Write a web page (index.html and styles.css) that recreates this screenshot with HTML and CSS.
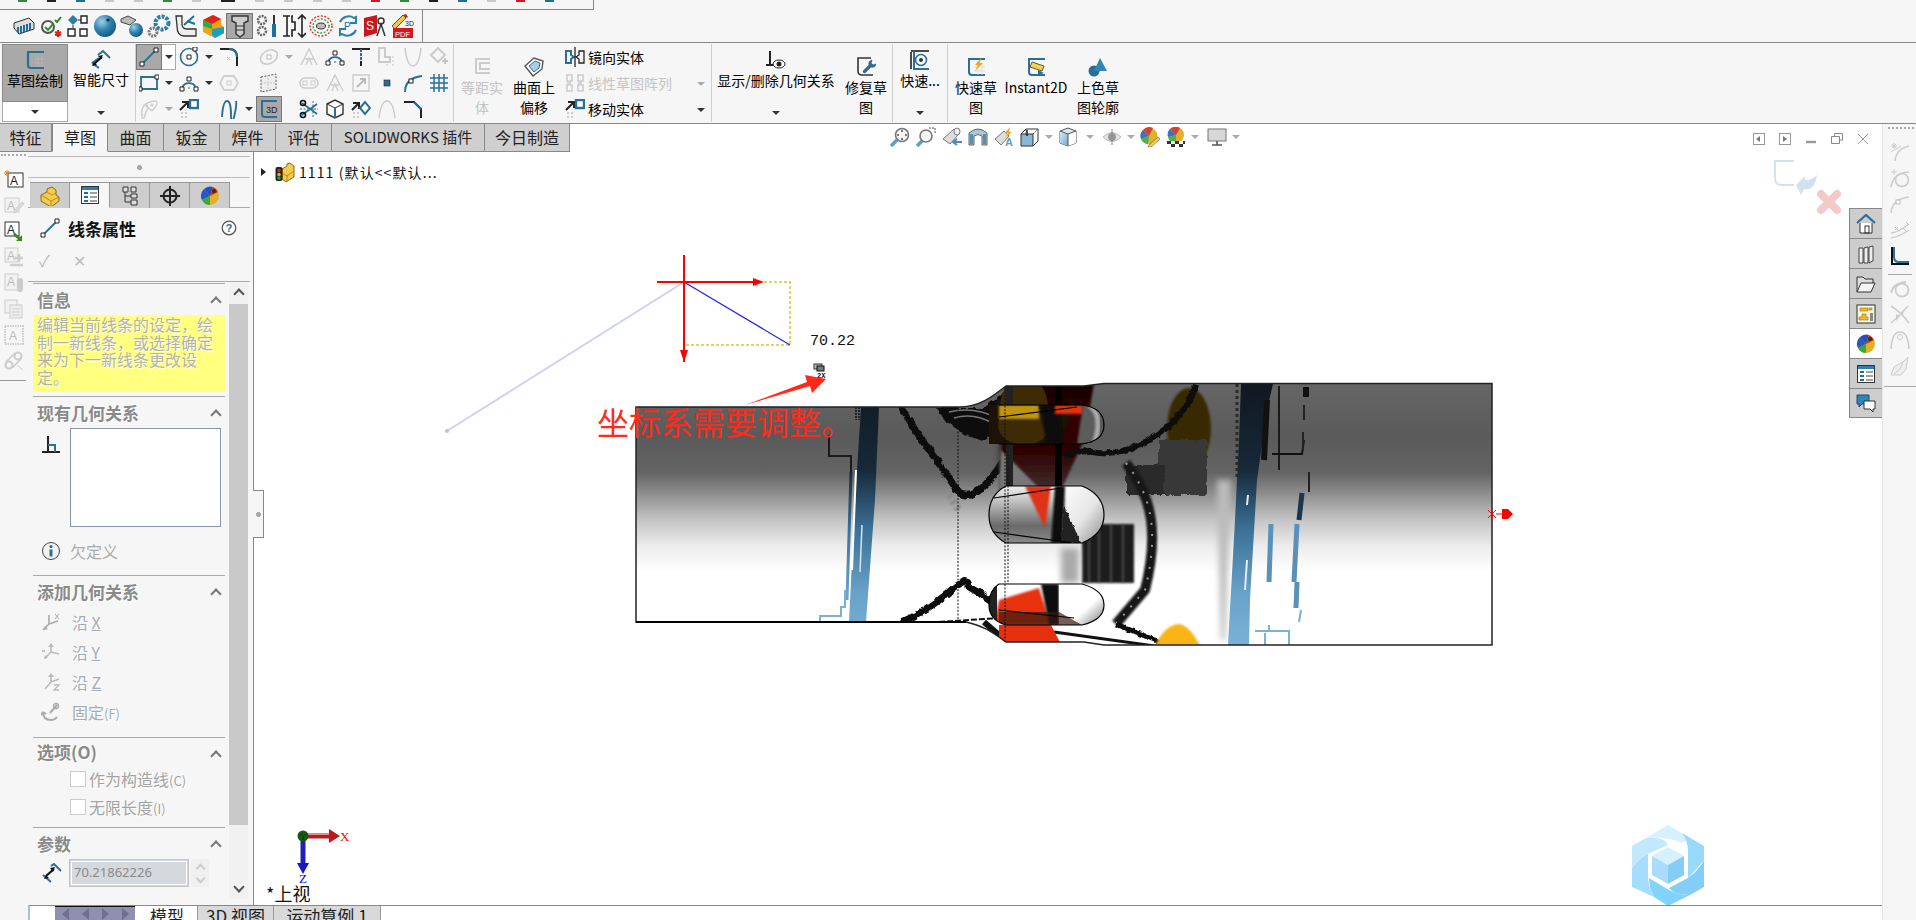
FILE: index.html
```html
<!DOCTYPE html>
<html lang="zh">
<head>
<meta charset="utf-8">
<title>SOLIDWORKS 草图</title>
<link rel="stylesheet" href="styles.css">
</head>
<body>
<svg class="sprite" xmlns="http://www.w3.org/2000/svg">
<defs>
<radialGradient id="gBall" cx=".35" cy=".3" r=".8"><stop offset="0" stop-color="#9fd0ea"/><stop offset=".5" stop-color="#2f83ad"/><stop offset="1" stop-color="#154f70"/></radialGradient>
<linearGradient id="gBox" x1="0" y1="0" x2="1" y2="1"><stop offset="0" stop-color="#d6ecf8"/><stop offset="1" stop-color="#6fa9cc"/></linearGradient>

<!-- command bar -->
<symbol id="c1" viewBox="0 0 24 24"><path d="M2 9l15-5 5 5v6l-15 5-5-6z" fill="#ddd" stroke="#333"/><path d="M6 13v6M9 12v7M12 11v7M15 10v7M18 9v7" stroke="#1f6f9c" stroke-width="2"/></symbol>
<symbol id="c2" viewBox="0 0 24 24"><circle cx="9" cy="13" r="6" fill="none" stroke="#555" stroke-width="2"/><path d="M6 13l3 3 5-6" fill="none" stroke="#2a9a2a" stroke-width="2"/><path d="M16 6l2 2 4-5" fill="none" stroke="#2a8a2a" stroke-width="2"/><path d="M19 16v7M16 18l6 3M22 18l-6 3" stroke="#e02010" stroke-width="2"/></symbol>
<symbol id="c3" viewBox="0 0 24 24"><path d="M7 1l5 5-5 5-5-5z" fill="#2f7ea6"/><path d="M7 11v3M12 6h3" stroke="#333"/><path d="M15 2h6v7h-6zM2 15h7v7H2zM14 15h7v7h-7z" fill="#fff" stroke="#222" stroke-width="1.4"/></symbol>
<symbol id="c4" viewBox="0 0 24 24"><circle cx="12" cy="12" r="11" fill="url(#gBall)"/><circle cx="15" cy="6" r="1.6" fill="#102a3a"/></symbol>
<symbol id="c5" viewBox="0 0 24 24"><path d="M1 5l7-3 8 4-6 5-9-3z" fill="#bbb" stroke="#444"/><circle cx="16" cy="16" r="7" fill="url(#gBall)"/></symbol>
<symbol id="c6" viewBox="0 0 24 24"><circle cx="15" cy="9" r="6.5" fill="none" stroke="#2f7ea6" stroke-width="4" stroke-dasharray="3 1.2"/><circle cx="6" cy="18" r="4" fill="none" stroke="#777" stroke-width="3" stroke-dasharray="2 1"/></symbol>
<symbol id="c7" viewBox="0 0 24 24"><path d="M2 2h6v8q0 5 5 5h9v7H10Q3 22 3 12z" fill="#eee" stroke="#333" stroke-width="1.3"/><path d="M10 11l10-9M13 7l8 3" stroke="#1f6f9c" stroke-width="2"/></symbol>
<symbol id="c8" viewBox="0 0 24 24"><path d="M2 6l10-5 8 4v6l3 2v6l-9 5-12-6z" fill="#f0a010"/><path d="M2 6l10-5 8 4-9 5z" fill="#e02020"/><path d="M2 6l9 4v5l-9-3z" fill="#20b040"/><path d="M11 15l12-2v6l-9 5-3-3z" fill="#18a0c0"/></symbol>
<symbol id="c9" viewBox="0 0 24 24"><path d="M4 2h16v5l-4 2v11l-4 3-4-3V9L4 7z" fill="#ccc" stroke="#333" stroke-width="1.4"/><path d="M8 12h8M8 16h8" stroke="#333"/></symbol>
<symbol id="c10" viewBox="0 0 24 24"><circle cx="7" cy="6" r="4" fill="none" stroke="#666" stroke-width="2.5" stroke-dasharray="2 1"/><circle cx="7" cy="17" r="4" fill="none" stroke="#666" stroke-width="2.5" stroke-dasharray="2 1"/><path d="M19 1v9" stroke="#333" stroke-width="2"/><path d="M19 10v13" stroke="#1f6f9c" stroke-width="4"/></symbol>
<symbol id="c11" viewBox="0 0 24 24"><path d="M1 2h7M1 22h7M5 2v20M11 2h-1v6h3v8h-3v6h1" fill="none" stroke="#222" stroke-width="1.6"/><path d="M20 1v22M16 5l4-4 4 4M16 19l4 4 4-4" fill="none" stroke="#222" stroke-width="1.6"/></symbol>
<symbol id="c12" viewBox="0 0 24 24"><ellipse cx="12" cy="12" rx="11" ry="10" fill="none" stroke="#e03020" stroke-dasharray="2 1.5" stroke-width="1.4"/><ellipse cx="12" cy="12" rx="8" ry="7" fill="none" stroke="#30a040" stroke-dasharray="2 1.5" stroke-width="1.4"/><ellipse cx="12" cy="12" rx="4.5" ry="3" fill="#bbb" stroke="#333"/></symbol>
<symbol id="c13" viewBox="0 0 24 24"><path d="M4 8a9.5 9.5 0 0 1 14-4l2-1v6h-6M20 16a9.5 9.5 0 0 1-14 4l-2 1v-6h6" fill="none" stroke="#2f7ea6" stroke-width="2"/><text x="8" y="16" class="svgt" font-size="10" fill="#1f6f9c">P</text></symbol>
<symbol id="c14" viewBox="0 0 24 24"><path d="M1 4l13-3v18L1 23z" fill="#c8161d"/><text x="3" y="16" class="svgt" font-size="12" fill="#fff">S</text><circle cx="18" cy="7" r="3" fill="none" stroke="#333" stroke-width="1.5"/><path d="M14 22l4-12 4 12" fill="none" stroke="#333" stroke-width="1.5"/></symbol>
<symbol id="c15" viewBox="0 0 24 24"><path d="M2 12L13 1l3 3L5 15z" fill="#f3c544" stroke="#555"/><path d="M13 1l3-1 2 3-2 1z" fill="#d02020"/><text x="15" y="12" class="svgt" font-size="7" fill="#222">3D</text><rect x="3" y="14" width="20" height="10" fill="#d8161d"/><text x="5" y="22.500" class="svgt" font-size="7.500" fill="#fff">PDF</text></symbol>

<!-- big ribbon -->
<symbol id="b-sketch" viewBox="0 0 20 20"><path d="M19 2H3v13q0 3 3 3h13" fill="none" stroke="#2b6f96" stroke-width="2.200"/><path d="M10 9h9M10 13h9M13 6v12M17 6v12" stroke="#bbb" stroke-dasharray="1.500 1.500"/></symbol>
<symbol id="b-dim" viewBox="0 0 20 20"><path d="M7 6l5-4 7 7" fill="none" stroke="#2b6f96" stroke-width="2"/><path d="M1 14l7 5M1 14l7-5" stroke="#2b6f96" stroke-width="2"/><path d="M3 15l8-7" stroke="#111" stroke-width="2"/><path d="M12 6l-5 1 3 3zM1 17l5-1-3-3z" fill="#111"/></symbol>
<symbol id="b-offset" viewBox="0 0 20 20"><path d="M18 2H4v14h14M18 6H8v6h10" fill="none" stroke="#ccc" stroke-width="2"/></symbol>
<symbol id="b-surf" viewBox="0 0 20 20"><path d="M1 9l9-8 9 3-1 8-9 7z" fill="#fff" stroke="#555" stroke-width="1.400"/><path d="M5 9l6-5 5 2-1 5-5 4z" fill="#a9cfe4" stroke="#2b6f96"/></symbol>
<symbol id="b-rel" viewBox="0 0 20 20"><path d="M4 1v14M0 15h10" stroke="#222" stroke-width="2"/><ellipse cx="13" cy="14" rx="6" ry="4" fill="#fff" stroke="#222"/><circle cx="13" cy="14" r="2.500" fill="#222"/></symbol>
<symbol id="b-repair" viewBox="0 0 20 20"><path d="M15 1H2v13q0 4 4 4h11" fill="none" stroke="#333" stroke-width="1.600"/><path d="M7 14l6-6q-1-4 3-5l-1 3 2 2 3-1q-1 4-5 3l-6 6q-2 0-2-2z" fill="#2b6f96" stroke="#1a4f70" stroke-width=".6"/></symbol>
<symbol id="b-snap" viewBox="0 0 20 20"><path d="M1 19V2M19 1H1" stroke="#111" stroke-width="1.500"/><path d="M4 1v18M19 19H3" stroke="#2b6f96" stroke-width="2"/><circle cx="11" cy="10" r="5.500" fill="none" stroke="#2b6f96" stroke-width="1.500"/><circle cx="11" cy="10" r="2" fill="#333"/></symbol>
<symbol id="b-quick" viewBox="0 0 20 20"><path d="M19 2H3v13q0 3 3 3h13" fill="none" stroke="#2b6f96" stroke-width="2"/><path d="M8 10h11M8 14h11M12 6v12M16 6v12" stroke="#ddd"/><path d="M15 1l-6 7h3l-3 6 8-8h-3z" fill="#f2a51c"/></symbol>
<symbol id="b-inst" viewBox="0 0 20 20"><path d="M19 2H3v13q0 3 3 3h13" fill="none" stroke="#2b6f96" stroke-width="2"/><path d="M6 5l12 4-2 5-12-4z" fill="#f3d24c" stroke="#333" stroke-width=".8"/><path d="M12 13l6 3-6 2z" fill="#2b6f96"/></symbol>
<symbol id="b-shade" viewBox="0 0 20 20"><circle cx="6" cy="14" r="5.500" fill="#2b6f96"/><path d="M12 1l7 13H6z" fill="#2f86b5"/></symbol>

<!-- small ribbon -->
<symbol id="s-line" viewBox="0 0 20 20"><path d="M3 17L17 3" stroke="#2b6f96" stroke-width="1.800"/><path d="M1 15h4v4H1zM15 1h4v4h-4z" fill="#fff" stroke="#222"/></symbol>
<symbol id="s-rect" viewBox="0 0 20 20"><path d="M2 4h16v12H2z" fill="none" stroke="#2b6f96" stroke-width="1.800"/><path d="M0 14h3v4H0zM16 2h4v4h-4z" fill="#fff" stroke="#222"/></symbol>
<symbol id="s-circle" viewBox="0 0 20 20"><circle cx="10" cy="10" r="8.500" fill="none" stroke="#2b6f96" stroke-width="1.600"/><path d="M8 8h4v4H8zM14 0h4v4h-4z" fill="#fff" stroke="#222"/></symbol>
<symbol id="s-arc" viewBox="0 0 20 20"><path d="M3 15a7.500 7.500 0 0 1 14 0" fill="none" stroke="#2b6f96" stroke-width="1.800"/><path d="M8 4h4v4H8zM1 14h4v4H1zM15 14h4v4h-4z" fill="#fff" stroke="#222"/><path d="M9 14l2 2M11 14l-2 2" stroke="#aaa"/></symbol>
<symbol id="s-fillet" viewBox="0 0 20 20"><path d="M1 2h9q8 0 8 8v9" fill="none" stroke="#222" stroke-width="2"/><path d="M10 2q8 0 8 8" fill="none" stroke="#2b6f96" stroke-width="2"/><path d="M8 10l3 3M11 10l-3 3" stroke="#bbb"/></symbol>
<symbol id="s-ellipse" viewBox="0 0 20 20"><ellipse cx="10" cy="10" rx="9" ry="6.500" transform="rotate(-30 10 10)" fill="none" stroke="#ccc" stroke-width="1.600"/><rect x="8" y="8" width="4" height="4" fill="#fff" stroke="#bbb"/></symbol>
<symbol id="s-a" viewBox="0 0 20 20"><path d="M2 18L10 2l8 16M6 12h8M7 18l3-7 3 7" fill="none" stroke="#ccc" stroke-width="1.400"/></symbol>
<symbol id="s-t" viewBox="0 0 20 20"><path d="M1 2h18" stroke="#222" stroke-width="2"/><path d="M10 2v12" stroke="#2b6f96" stroke-width="2" stroke-dasharray="3 1"/><path d="M10 14v5" stroke="#222" stroke-width="2"/></symbol>
<symbol id="s-l" viewBox="0 0 20 20"><path d="M2 1h6v9h5v5H2z" fill="none" stroke="#ccc" stroke-width="2"/><path d="M15 10h4M15 14h4M15 18h4M9 18h4" stroke="#ddd" stroke-width="2" stroke-dasharray="2 2"/></symbol>
<symbol id="s-para" viewBox="0 0 20 20"><path d="M2 1q2 18 8 18T18 1" fill="none" stroke="#ccc" stroke-width="1.600"/></symbol>
<symbol id="s-dia" viewBox="0 0 20 20"><path d="M2 8l7-7 7 7-7 7z" fill="none" stroke="#ccc" stroke-width="2"/><path d="M13 14h6M16 11v6" stroke="#bbb" stroke-width="1.600"/></symbol>
<symbol id="s-poly" viewBox="0 0 20 20"><path d="M5 3h10l4 7-4 7H5l-4-7z" fill="none" stroke="#d0d0d0" stroke-width="1.800"/><rect x="8" y="8" width="4" height="4" fill="none" stroke="#ccc"/></symbol>
<symbol id="s-dash" viewBox="0 0 20 20"><path d="M2 4l15-3v15L2 19z" fill="#eee" stroke="#555" stroke-dasharray="2 1.500"/><path d="M9 2v16M2 10h15" stroke="#ccc" stroke-dasharray="2 1"/></symbol>
<symbol id="s-slot" viewBox="0 0 20 20"><rect x="1" y="5" width="18" height="10" rx="5" fill="none" stroke="#ccc" stroke-width="1.600"/><rect x="4" y="8" width="4" height="4" fill="none" stroke="#ccc"/><rect x="12" y="8" width="4" height="4" fill="none" stroke="#ccc"/></symbol>
<symbol id="s-conv" viewBox="0 0 20 20"><path d="M2 2h16v16H2z" fill="none" stroke="#ccc" stroke-width="1.400"/><path d="M6 14l7-7M9 6h5v5" fill="none" stroke="#bbb" stroke-width="2"/></symbol>
<symbol id="s-pt" viewBox="0 0 20 20"><rect x="7" y="7" width="6" height="6" fill="#2b6f96" stroke="#222" stroke-width=".6"/></symbol>
<symbol id="s-curve" viewBox="0 0 20 20"><path d="M2 19q0-14 17-16" fill="none" stroke="#2b6f96" stroke-width="2"/><rect x="6" y="6" width="4" height="4" fill="#fff" stroke="#222"/></symbol>
<symbol id="s-grid" viewBox="0 0 20 20"><path d="M1 5h18M1 10h18M1 15h18M5 1v18M10 1v18M15 1v18" stroke="#2b6f96" stroke-width="1.500"/></symbol>
<symbol id="s-spl" viewBox="0 0 20 20"><path d="M3 16q-2-10 8-13t6 4-6 3-5 6-3 0z" fill="none" stroke="#ccc" stroke-width="1.500"/><circle cx="8" cy="7" r="1.500" fill="#ccc"/><circle cx="13" cy="6" r="1.500" fill="#ccc"/></symbol>
<symbol id="s-move" viewBox="0 0 20 20"><path d="M1 11l7-7M3 3h6v6" fill="none" stroke="#222" stroke-width="2"/><rect x="11" y="1" width="8" height="8" fill="#fff" stroke="#2b6f96" stroke-width="2.400"/><path d="M2 14h2M6 14h2M2 18h2M6 18h2" stroke="#ccc" stroke-width="2"/></symbol>
<symbol id="s-n" viewBox="0 0 20 20"><path d="M3 18Q4 2 8 2t4 14 3 2 2-16" fill="none" stroke="#2b6f96" stroke-width="1.900"/></symbol>
<symbol id="s-3d" viewBox="0 0 20 20"><path d="M18 2H3v13q0 3 3 3h12" fill="none" stroke="#2b6f96" stroke-width="2"/><text x="7" y="14" class="svgt" font-size="9" fill="#222">3D</text></symbol>
<symbol id="s-trim" viewBox="0 0 20 20"><path d="M3 4l15 11M3 16L18 5" stroke="#2b6f96" stroke-width="1.800"/><circle cx="4" cy="4" r="2.500" fill="none" stroke="#111" stroke-width="1.600"/><circle cx="4" cy="16" r="2.500" fill="none" stroke="#111" stroke-width="1.600"/><path d="M1 10h18M14 2v16" stroke="#2b6f96" stroke-dasharray="2 1.500"/></symbol>
<symbol id="s-cube" viewBox="0 0 20 20"><path d="M2 5l8-4 8 4v10l-8 4-8-4z" fill="#fff" stroke="#333" stroke-width="1.400"/><path d="M2 5l8 4 8-4M10 9v10" fill="none" stroke="#333"/><path d="M10 9v10" stroke="#2b6f96" stroke-width="2"/></symbol>
<symbol id="s-mv2" viewBox="0 0 20 20"><path d="M1 11l6-6M2 4h6v6" fill="none" stroke="#222" stroke-width="2"/><path d="M9 9l5-6 5 6-5 6z" fill="#fff" stroke="#2b6f96" stroke-width="2"/><path d="M2 14h2M6 14h2M2 18h2M6 18h2" stroke="#ccc" stroke-width="2"/></symbol>
<symbol id="s-arch" viewBox="0 0 20 20"><path d="M2 19Q4 2 10 2t8 17" fill="none" stroke="#ccc" stroke-width="1.400"/></symbol>
<symbol id="s-chamfer" viewBox="0 0 20 20"><path d="M1 3h10l7 7v9" fill="none" stroke="#222" stroke-width="2"/><path d="M11 3l7 7" stroke="#2b6f96" stroke-width="2"/></symbol>
<symbol id="s-mirror" viewBox="0 0 20 20"><path d="M1 4h5v4l3 2-3 2v4H1z" fill="none" stroke="#2b6f96" stroke-width="2"/><path d="M19 4h-5v4l-3 2 3 2v4h5z" fill="none" stroke="#222" stroke-width="1.300"/><path d="M10 0v20" stroke="#222" stroke-width="1.300"/></symbol>
<symbol id="s-pattern" viewBox="0 0 20 20"><path d="M2 2h5v6H5v4h2v6H2v-6h1V8H2zM13 2h5v6h-2v4h2v6h-5v-6h1V8h-1z" fill="none" stroke="#ccc" stroke-width="1.600"/></symbol>

<!-- tabs -->
<symbol id="t-part" viewBox="0 0 20 20"><path d="M1 9l6-3V3l5-2 4 3v5l3 2v4l-8 6-10-6z" fill="#f6ca4a" stroke="#8a6a10"/><path d="M1 9l10 6v5M11 15l8-4M7 6l5 3 4-2" fill="none" stroke="#a57e12" stroke-width=".8"/></symbol>
<symbol id="t-model" viewBox="0 0 20 20"><path d="M7 7l5-3V2l3-1 4 3v5l0 6-8 5-4-3z" fill="#f6ca4a" stroke="#8a6a10"/><path d="M7 11l5 3 7-5M12 14v5" fill="none" stroke="#a57e12" stroke-width=".8"/><rect x="0.500" y="5" width="7" height="14" rx="2" fill="#222"/><circle cx="4" cy="8.500" r="1.800" fill="#d8281c"/><circle cx="4" cy="12.500" r="1.800" fill="#e0b020"/><circle cx="4" cy="16" r="1.800" fill="#2aa040"/></symbol>
<symbol id="t-list" viewBox="0 0 20 20"><rect x="1.500" y="1.500" width="17" height="17" fill="#fff" stroke="#333"/><path d="M2 3.500h16" stroke="#2b80ad" stroke-width="3"/><path d="M4 8h4M4 12h4M4 16h4" stroke="#1f6f9c" stroke-width="2"/><path d="M10 8h7M10 12h7M10 16h7" stroke="#444"/></symbol>
<symbol id="t-tree" viewBox="0 0 20 20"><path d="M3 1h5v5H3zM11 1h5v5h-5zM11 8h6v4h-6zM11 14h6v5h-6z" fill="#ddd" stroke="#333"/><path d="M5 6v10h6M5 10h6" fill="none" stroke="#333"/></symbol>
<symbol id="t-cross" viewBox="0 0 20 20"><circle cx="10" cy="10" r="6.500" fill="none" stroke="#222" stroke-width="2"/><path d="M10 0v20M0 10h20" stroke="#222" stroke-width="2"/></symbol>
<symbol id="t-ball" viewBox="0 0 20 20"><circle cx="10" cy="10" r="9" fill="#dfb22a"/><path d="M10 10L4 3a9 9 0 0 1 9-2z" fill="#2050b8"/><path d="M10 10l3-9a9 9 0 0 1 5 5z" fill="#d82818"/><path d="M10 10l-6-7a9 9 0 0 0-2 11z" fill="#2858c8"/><path d="M10 10l-8 4a9 9 0 0 0 8 5z" fill="#3ca83c"/><circle cx="14" cy="5" r="2" fill="#331"/></symbol>

<!-- left strip -->
<symbol id="l1" viewBox="0 0 20 20"><rect x="4" y="4" width="15" height="14" fill="#fff" stroke="#333"/><text x="6" y="16" class="svgt" font-size="12" fill="#222">A</text><path d="M3 1v6M0 4h6M1 2l4 4M5 2L1 6" stroke="#e0802a"/></symbol>
<symbol id="l2" viewBox="0 0 20 20"><rect x="1" y="3" width="14" height="14" fill="#f2f2f2" stroke="#ccc"/><text x="3" y="15" class="svgt" font-size="12" fill="#bbb">A</text><path d="M9 17l9-10 2 2-9 9z" fill="#ddd" stroke="#ccc"/></symbol>
<symbol id="l3" viewBox="0 0 20 20"><rect x="1" y="1" width="14" height="14" fill="#fff" stroke="#333"/><text x="3" y="13" class="svgt" font-size="12" fill="#222">A</text><path d="M11 12l5 4 2-2v6h-6l2-2-5-4z" fill="#3a8a1a"/></symbol>
<symbol id="l4" viewBox="0 0 20 20"><rect x="1" y="1" width="13" height="14" fill="#f2f2f2" stroke="#ccc"/><text x="3" y="13" class="svgt" font-size="12" fill="#bbb">A</text><path d="M11 11h8M15 7v8M6 18h13" stroke="#ccc" stroke-width="2.400"/></symbol>
<symbol id="l5" viewBox="0 0 20 20"><rect x="1" y="1" width="13" height="16" fill="#f2f2f2" stroke="#ccc"/><text x="3" y="13" class="svgt" font-size="12" fill="#bbb">A</text><rect x="13" y="5" width="6" height="14" rx="3" fill="#ccc"/></symbol>
<symbol id="l6" viewBox="0 0 20 20"><rect x="1" y="1" width="12" height="13" fill="#f2f2f2" stroke="#ccc"/><rect x="6" y="6" width="12" height="13" fill="#eee" stroke="#ccc"/><path d="M8 10h8M8 13h8M8 16h8" stroke="#ccc"/></symbol>
<symbol id="l7" viewBox="0 0 20 20"><rect x="1" y="1" width="18" height="18" fill="none" stroke="#ccc" stroke-width="2" stroke-dasharray="1.500 1"/><text x="5" y="15" class="svgt" font-size="12" fill="#bbb">A</text></symbol>
<symbol id="l8" viewBox="0 0 20 20"><circle cx="5" cy="14" r="3.500" fill="none" stroke="#ccc" stroke-width="2"/><circle cx="14" cy="5" r="3.500" fill="none" stroke="#ccc" stroke-width="2"/><path d="M2 11l9-9M8 17l9-9" stroke="#ccc" stroke-width="1.600"/><path d="M13 14l6 5" stroke="#ccc"/></symbol>

<!-- panel -->
<symbol id="p-rel" viewBox="0 0 20 20"><path d="M7 1v16M1 17h18" stroke="#222" stroke-width="2"/><path d="M7 10h7v7" fill="none" stroke="#2b6f96" stroke-width="2"/></symbol>
<symbol id="p-info" viewBox="0 0 20 20"><circle cx="10" cy="10" r="8.500" fill="#f3f3f3" stroke="#444"/><circle cx="10" cy="5.500" r="1.600" fill="#2b6f96"/><path d="M10 8.500v7" stroke="#2b6f96" stroke-width="3"/></symbol>
<symbol id="p-x" viewBox="0 0 20 20"><path d="M8 12L8 3M8 12l9-3M8 12l-6 6" fill="none" stroke="#aaa" stroke-width="1.600"/><path d="M14 2l4 5M18 2l-4 5" stroke="#aaa"/><path d="M3 18l1-4 3 3z" fill="#aaa"/></symbol>
<symbol id="p-y" viewBox="0 0 20 20"><path d="M10 2v8M10 10l8 2M10 10l-6 6" fill="none" stroke="#bbb" stroke-width="1.600"/><path d="M7 5l3-4 3 4zM3 17l1-4 3 3z" fill="#bbb"/><path d="M1 8l3 2M4 8l-3 2" stroke="#bbb"/></symbol>
<symbol id="p-z" viewBox="0 0 20 20"><path d="M10 10V2M10 10l8-3M10 10l-6 7" fill="none" stroke="#bbb" stroke-width="1.600"/><path d="M7 5l3-4 3 4z" fill="#bbb"/><path d="M13 13h5l-5 5h5" fill="none" stroke="#bbb" stroke-width="1.400"/></symbol>
<symbol id="p-fix" viewBox="0 0 20 20"><path d="M9 11l7-8" stroke="#aaa" stroke-width="2"/><circle cx="15" cy="4" r="2.500" fill="none" stroke="#aaa" stroke-width="1.400"/><path d="M2 10q0 8 8 8 4 0 6-3M2 10l-2 3M2 10l3 2" fill="none" stroke="#aaa" stroke-width="2"/></symbol>
<symbol id="p-dim" viewBox="0 0 20 20"><path d="M9 3l3-2 7 7M1 12l8 7" fill="none" stroke="#2b6f96" stroke-width="2"/><path d="M4 13l8-7" stroke="#111" stroke-width="2.200"/><path d="M13 4l-5 1 3 4zM2 16l5-1-3-3z" fill="#111"/></symbol>
<symbol id="p-help" viewBox="0 0 20 20"><circle cx="10" cy="10" r="8.500" fill="#fff" stroke="#555" stroke-width="1.600"/><text x="5.500" y="15" class="svgb" font-size="14" fill="#1f6f9c">?</text></symbol>

<!-- view toolbar -->
<symbol id="v1" viewBox="0 0 20 20"><path d="M1 19l6-6" stroke="#5f9fc4" stroke-width="3.500"/><circle cx="12" cy="8" r="6.500" fill="#f6f6f6" stroke="#777" stroke-width="1.600"/><path d="M12 3v2M12 11v2M7 8h2M15 8h2" stroke="#555" stroke-width="1.600"/></symbol>
<symbol id="v2" viewBox="0 0 20 20"><path d="M1 19l6-6" stroke="#5f9fc4" stroke-width="3.500"/><circle cx="10" cy="9" r="6" fill="#f6f6f6" stroke="#777" stroke-width="1.600"/><path d="M13 1h6v6" fill="none" stroke="#555" stroke-dasharray="2 1"/></symbol>
<symbol id="v3" viewBox="0 0 20 20"><path d="M1 12L12 2l5 5-9 10z" fill="#ddd" stroke="#777"/><ellipse cx="15" cy="4.500" rx="3" ry="3.500" fill="#eee" stroke="#777"/><path d="M20 15H11M15 12l-4 3 4 3" fill="none" stroke="#4d8db5" stroke-width="2"/></symbol>
<symbol id="v4" viewBox="0 0 20 20"><path d="M1 6q9-8 18 0v12h-5V9q-4-3-8 0v9H1z" fill="#aac6d8" stroke="#666"/><path d="M2 7h3v10H2zM15 7h3v10h-3z" fill="#5b8fb0"/></symbol>
<symbol id="v5" viewBox="0 0 20 20"><path d="M1 12L10 4l5 5-8 9z" fill="#ddd" stroke="#777"/><path d="M16 0l-5 6h3l-3 5 7-6h-3z" fill="#f2a51c"/><text x="11" y="19" class="svgb" font-size="11" fill="#5f9fc4">A</text></symbol>
<symbol id="v6" viewBox="0 0 20 20"><path d="M1 7h12v12H1z" fill="#8ab8d4" stroke="#333"/><path d="M1 7l5-5h12v12l-5 5" fill="none" stroke="#333"/><path d="M6 2v5M13 7l5-5" stroke="#555" stroke-dasharray="2 1"/><path d="M7 3v6" stroke="#222" stroke-width="1.500"/></symbol>
<symbol id="v7" viewBox="0 0 20 20"><path d="M2 4l8-3 8 3v12l-8 3-8-3z" fill="#d9e9f2" stroke="#555"/><path d="M2 4l8 3v12l-8-3z" fill="url(#gBox)"/><path d="M10 7l8-3v12l-8 3z" fill="#fff"/><path d="M2 4l8 3 8-3M10 7v12" fill="none" stroke="#555"/></symbol>
<symbol id="v8" viewBox="0 0 20 20"><path d="M1 10q9-9 18 0-9 9-18 0z" fill="#e4e4e4" stroke="#bbb"/><circle cx="10" cy="10" r="4" fill="#999"/><path d="M10 2v16" stroke="#888"/></symbol>
<symbol id="v9" viewBox="0 0 20 20"><circle cx="9" cy="9" r="8.500" fill="#dfb22a"/><path d="M9 9L3 3a8.500 8.500 0 0 1 10-2z" fill="#d84030"/><path d="M9 9L3 3a8.500 8.500 0 0 0-2 9z" fill="#3b72c4"/><path d="M9 9l-8 3a8.500 8.500 0 0 0 7 5z" fill="#4eb04e"/><path d="M9 18l9-8 2 2-9 8-3 0z" fill="#f3d24c" stroke="#555" stroke-width=".6"/></symbol>
<symbol id="v10" viewBox="0 0 20 20"><circle cx="10" cy="8" r="8" fill="#dfb22a"/><path d="M10 8L4 2a8 8 0 0 1 10-1z" fill="#d84030"/><path d="M10 8L4 2a8 8 0 0 0-2 8z" fill="#3b72c4"/><path d="M10 8l-8 2a8 8 0 0 0 8 6z" fill="#4eb04e"/><path d="M1 14h18v6H1z" fill="#fff"/><path d="M1 14h4v3H1zM9 14h4v3H9zM17 14h2v3h-2zM5 17h4v3H5zM13 17h4v3h-4z" fill="#333"/></symbol>
<symbol id="v11" viewBox="0 0 20 20"><rect x="1" y="2" width="18" height="12" fill="#d8d8d8" stroke="#777"/><path d="M10 14v4M5 18h10" stroke="#555" stroke-width="1.600"/></symbol>
<symbol id="w1" viewBox="0 0 12 12"><rect x=".5" y=".5" width="11" height="11" fill="#fff" stroke="#999"/><path d="M3 6l4-3v6z" fill="#777"/></symbol>
<symbol id="w2" viewBox="0 0 12 12"><rect x=".5" y=".5" width="11" height="11" fill="#fff" stroke="#999"/><path d="M8 6L4 3v6z" fill="#777"/></symbol>
<symbol id="w3" viewBox="0 0 12 12"><path d="M1 9h10" stroke="#999" stroke-width="2.400"/></symbol>
<symbol id="w4" viewBox="0 0 12 12"><path d="M3.500 3V.5h8v6.500H9M.5 3.500h8v7h-8z" fill="none" stroke="#888"/></symbol>
<symbol id="w5" viewBox="0 0 12 12"><path d="M1 1l10 10M11 1L1 11" stroke="#999"/></symbol>

<!-- right tabs -->
<symbol id="r-home" viewBox="0 0 20 20"><path d="M1 9l9-8 9 8" fill="none" stroke="#2b6f96" stroke-width="2.200"/><path d="M4 9v10h12V9" fill="#fff" stroke="#333"/><rect x="9" y="12" width="4" height="7" fill="none" stroke="#333"/></symbol>
<symbol id="r-book" viewBox="0 0 20 20"><path d="M3 4h4v15H3zM8 4l4-1v16H8zM13 3l4-1v15l-4 2z" fill="#eee" stroke="#444"/></symbol>
<symbol id="r-folder" viewBox="0 0 20 20"><path d="M1 18V3h6l2 2h8v4" fill="#ddd" stroke="#333"/><path d="M1 18l4-9h14l-4 9z" fill="#f4f4f4" stroke="#333"/></symbol>
<symbol id="r-lay" viewBox="0 0 20 20"><rect x="1" y="1" width="18" height="18" fill="#f4f4e0" stroke="#333"/><path d="M4 4h8v3H4zM6 10h4v3h2v3H3v-3h3zM13 4h3v2h-3z" fill="#f2b81c" stroke="#8a6a10" stroke-width=".5"/><rect x="14" y="9" width="3" height="8" fill="#888"/></symbol>
<symbol id="r-chat" viewBox="0 0 20 20"><path d="M1 2h12v9H6l-3 3v-3H1z" fill="#2f86b5" stroke="#1a4f70"/><path d="M8 8h11v8h-2v3l-3-3H8z" fill="#fff" stroke="#333"/></symbol>

<!-- right strip -->
<symbol id="q1" viewBox="0 0 20 20"><path d="M5 19q1-12 14-15" fill="none" stroke="#ccc" stroke-width="1.500"/><path d="M1 10l10-6M4 1v6M1 4h6M2 2l4 4M6 2L2 6" stroke="#ccc"/></symbol>
<symbol id="q2" viewBox="0 0 20 20"><circle cx="12" cy="12" r="6.500" fill="none" stroke="#ccc" stroke-width="1.600"/><path d="M1 19q2-14 18-15" fill="none" stroke="#ccc" stroke-width="1.600"/><path d="M4 1v6M1 4h6" stroke="#ccc"/></symbol>
<symbol id="q3" viewBox="0 0 20 20"><path d="M1 19q1-14 18-16" fill="none" stroke="#ccc" stroke-width="1.500"/><rect x="6" y="6" width="4" height="4" fill="#fff" stroke="#bbb"/></symbol>
<symbol id="q4" viewBox="0 0 20 20"><path d="M1 13q8-1 18-9M1 18q10-2 18-8" fill="none" stroke="#ccc" stroke-width="1.400"/><path d="M5 7l3 3M8 7l-3 3M13 8l3 3M16 2l3 3" stroke="#bbb"/></symbol>
<symbol id="q5" viewBox="0 0 20 20"><path d="M2 1v17h17" fill="none" stroke="#111" stroke-width="2"/><path d="M4 1v10q0 5 5 5h10" fill="none" stroke="#2b6f96" stroke-width="2"/></symbol>
<symbol id="q6" viewBox="0 0 20 20"><circle cx="12" cy="12" r="6.500" fill="none" stroke="#ccc" stroke-width="1.800"/><path d="M1 15q2-10 15-11" fill="none" stroke="#ccc" stroke-width="1.800"/></symbol>
<symbol id="q7" viewBox="0 0 20 20"><path d="M1 2q10 6 18 17M1 19Q10 12 18 2" fill="none" stroke="#ccc" stroke-width="1.500"/><path d="M6 10l4 2-4 5zM10 10l4-5-1 6z" fill="#ccc"/></symbol>
<symbol id="q8" viewBox="0 0 20 20"><path d="M1 19Q2 2 10 2t9 17" fill="none" stroke="#ccc" stroke-width="1.600"/><circle cx="10" cy="7" r="2.500" fill="none" stroke="#ccc"/></symbol>
<symbol id="q9" viewBox="0 0 20 20"><path d="M1 19l3-8 9-5 5-5-2 12-5 6z" fill="#eee" stroke="#ccc"/><path d="M4 18l6-5 3-7" fill="none" stroke="#ccc"/></symbol>
<symbol id="ghost" viewBox="0 0 46 36"><path d="M21 1H2v17q0 7 7 7h12" fill="none" stroke="#c4dbe8" stroke-width="1.800" opacity=".8"/><path d="M23 25l9-9v4q8 0 12-5-2 16-13 14l-3 6z" fill="#cfe2ee"/></symbol>
</defs>
</svg>

<div class="app">
  <div class="qat">
    <div class="qat-bar">
      <i class="bit bit-g"></i><i class="bit bit-k"></i><i class="bit bit-b"></i><i class="bit bit-n"></i><i class="bit bit-n"></i><i class="bit bit-g"></i><i class="bit bit-n"></i><i class="bit bit-k bit-w"></i><i class="bit bit-n"></i><i class="bit bit-n"></i><i class="bit bit-n"></i><i class="bit bit-n"></i><i class="bit bit-r"></i><i class="bit bit-g"></i><i class="bit bit-k"></i><i class="bit bit-b"></i><i class="bit bit-n"></i><i class="bit bit-r"></i><i class="bit bit-b"></i>
    </div>
  </div>

  <div class="cmdbar">
    <div class="cmd-group">
      <span class="cmd"><svg class="i24"><use href="#c1"/></svg></span>
      <span class="cmd"><svg class="i24"><use href="#c2"/></svg></span>
      <span class="cmd"><svg class="i24"><use href="#c3"/></svg></span>
      <span class="cmd"><svg class="i24"><use href="#c4"/></svg></span>
      <span class="cmd"><svg class="i24"><use href="#c5"/></svg></span>
      <span class="cmd"><svg class="i24"><use href="#c6"/></svg></span>
      <span class="cmd"><svg class="i24"><use href="#c7"/></svg></span>
      <span class="cmd"><svg class="i24"><use href="#c8"/></svg></span>
      <span class="cmd cmd-on"><svg class="i24"><use href="#c9"/></svg></span>
      <span class="cmd"><svg class="i24"><use href="#c10"/></svg></span>
      <span class="cmd"><svg class="i24"><use href="#c11"/></svg></span>
      <span class="cmd"><svg class="i24"><use href="#c12"/></svg></span>
      <span class="cmd"><svg class="i24"><use href="#c13"/></svg></span>
      <span class="cmd"><svg class="i24"><use href="#c14"/></svg></span>
      <span class="cmd"><svg class="i24"><use href="#c15"/></svg></span>
    </div>
  </div>

  <div class="ribbon">
    <div class="rsec rsec-first">
      <div class="sk-btn">
        <div class="sk-main"><svg class="i20"><use href="#b-sketch"/></svg><span>草图绘制</span></div>
        <div class="sk-drop"><i class="dd dd-k"></i></div>
      </div>
      <div class="dim-btn">
        <svg class="i20"><use href="#b-dim"/></svg><span>智能尺寸</span>
        <i class="dd dd-k dim-dd"></i>
      </div>
    </div>

    <div class="rsec tool-grid">
      <span class="tc tc-on"><svg class="i20"><use href="#s-line"/></svg></span><span class="tc tc-dd tc-ddbox"><i class="dd dd-k"></i></span>
      <span class="tc"><svg class="i20"><use href="#s-circle"/></svg></span><span class="tc tc-dd"><i class="dd dd-k"></i></span>
      <span class="tc"><svg class="i20"><use href="#s-fillet"/></svg></span><span class="tc tc-dd"></span>
      <span class="tc"><svg class="i20"><use href="#s-ellipse"/></svg></span><span class="tc tc-dd"><i class="dd"></i></span>
      <span class="tc"><svg class="i20"><use href="#s-a"/></svg></span>
      <span class="tc"><svg class="i20"><use href="#s-arc"/></svg></span>
      <span class="tc"><svg class="i20"><use href="#s-t"/></svg></span>
      <span class="tc"><svg class="i20"><use href="#s-l"/></svg></span>
      <span class="tc"><svg class="i20"><use href="#s-para"/></svg></span>
      <span class="tc"><svg class="i20"><use href="#s-dia"/></svg></span>

      <span class="tc"><svg class="i20"><use href="#s-rect"/></svg></span><span class="tc tc-dd"><i class="dd dd-k"></i></span>
      <span class="tc"><svg class="i20"><use href="#s-arc"/></svg></span><span class="tc tc-dd"><i class="dd dd-k"></i></span>
      <span class="tc"><svg class="i20"><use href="#s-poly"/></svg></span><span class="tc tc-dd"></span>
      <span class="tc"><svg class="i20"><use href="#s-dash"/></svg></span><span class="tc tc-dd"></span>
      <span class="tc"><svg class="i20"><use href="#s-slot"/></svg></span>
      <span class="tc"><svg class="i20"><use href="#s-a"/></svg></span>
      <span class="tc"><svg class="i20"><use href="#s-conv"/></svg></span>
      <span class="tc"><svg class="i20"><use href="#s-pt"/></svg></span>
      <span class="tc"><svg class="i20"><use href="#s-curve"/></svg></span>
      <span class="tc"><svg class="i20"><use href="#s-grid"/></svg></span>

      <span class="tc"><svg class="i20"><use href="#s-spl"/></svg></span><span class="tc tc-dd"><i class="dd"></i></span>
      <span class="tc"><svg class="i20"><use href="#s-move"/></svg></span><span class="tc tc-dd"></span>
      <span class="tc"><svg class="i20"><use href="#s-n"/></svg></span><span class="tc tc-dd"><i class="dd dd-k"></i></span>
      <span class="tc tc-on"><svg class="i20"><use href="#s-3d"/></svg></span><span class="tc tc-dd"></span>
      <span class="tc"><svg class="i20"><use href="#s-trim"/></svg></span>
      <span class="tc"><svg class="i20"><use href="#s-cube"/></svg></span>
      <span class="tc"><svg class="i20"><use href="#s-mv2"/></svg></span>
      <span class="tc"><svg class="i20"><use href="#s-arch"/></svg></span>
      <span class="tc"><svg class="i20"><use href="#s-chamfer"/></svg></span>
      <span class="tc"></span>
    </div>

    <div class="rsec rsec-edit">
      <div class="big big-off"><svg class="i20"><use href="#b-offset"/></svg><span>等距实体</span></div>
      <div class="big"><svg class="i20"><use href="#b-surf"/></svg><span>曲面上偏移</span></div>
      <div class="mini-list">
        <div class="mini"><svg class="i20"><use href="#s-mirror"/></svg><span>镜向实体</span></div>
        <div class="mini mini-off"><svg class="i20"><use href="#s-pattern"/></svg><span>线性草图阵列</span><i class="dd mini-dd"></i></div>
        <div class="mini"><svg class="i20"><use href="#s-move"/></svg><span>移动实体</span><i class="dd dd-k mini-dd"></i></div>
      </div>
    </div>

    <div class="rsec rsec-rel">
      <div class="tall tall-wide"><svg class="i20"><use href="#b-rel"/></svg><span>显示/删除几何关系</span><i class="dd dd-k tall-dd"></i></div>
      <div class="big"><svg class="i20"><use href="#b-repair"/></svg><span>修复草图</span></div>
    </div>

    <div class="rsec rsec-snap">
      <div class="tall"><svg class="i20"><use href="#b-snap"/></svg><span>快速...</span><i class="dd dd-k tall-dd"></i></div>
    </div>

    <div class="rsec rsec-last">
      <div class="big big-quick"><svg class="i20"><use href="#b-quick"/></svg><span>快速草图</span></div>
      <div class="big big-inst"><svg class="i20"><use href="#b-inst"/></svg><span>Instant2D</span></div>
      <div class="big big-shade"><svg class="i20"><use href="#b-shade"/></svg><span>上色草图轮廓</span></div>
    </div>
  </div>

  <div class="workspace">
    <nav class="tabs">
      <span class="tab tab-a">特征</span><span class="tab tab-on">草图</span><span class="tab">曲面</span><span class="tab">钣金</span><span class="tab">焊件</span><span class="tab">评估</span><span class="tab tab-wide">SOLIDWORKS 插件</span><span class="tab tab-today">今日制造</span>
    </nav>

    <aside class="lstrip">
      <div class="lgrip"></div>
      <div class="licons">
        <svg class="i20"><use href="#l1"/></svg>
        <svg class="i20"><use href="#l2"/></svg>
        <svg class="i20"><use href="#l3"/></svg>
        <svg class="i20"><use href="#l4"/></svg>
        <svg class="i20"><use href="#l5"/></svg>
        <svg class="i20"><use href="#l6"/></svg>
        <svg class="i20"><use href="#l7"/></svg>
        <svg class="i20"><use href="#l8"/></svg>
      </div>
    </aside>

    <div class="center">
      <div class="center-top">
        <section class="panel">
          <div class="p-ruler"></div>
          <div class="p-grip"><i class="dot"></i></div>
          <div class="p-tabs">
            <span class="ptab"><svg class="i20"><use href="#t-part"/></svg></span>
            <span class="ptab ptab-on"><svg class="i20"><use href="#t-list"/></svg></span>
            <span class="ptab"><svg class="i20"><use href="#t-tree"/></svg></span>
            <span class="ptab"><svg class="i20"><use href="#t-cross"/></svg></span>
            <span class="ptab"><svg class="i20"><use href="#t-ball"/></svg></span>
          </div>
          <div class="p-title"><svg class="i20"><use href="#s-line"/></svg><b>线条属性</b><svg class="i16 p-help"><use href="#p-help"/></svg></div>
          <div class="p-actions"><span class="pa">✓</span><span class="pa">✕</span></div>
          <div class="p-body">
            <div class="p-scroll">
              <div class="sec">
                <div class="hdr">信息<i class="chev"></i></div>
                <div class="note">编辑当前线条的设定，绘制一新线条，或选择确定来为下一新线条更改设定。</div>
              </div>
              <div class="sec">
                <div class="hdr">现有几何关系<i class="chev"></i></div>
                <div class="rel-row"><svg class="i20"><use href="#p-rel"/></svg><div class="rel-box"></div></div>
                <div class="state-row"><svg class="i20"><use href="#p-info"/></svg><span>欠定义</span></div>
              </div>
              <div class="sec sec-add">
                <div class="hdr">添加几何关系<i class="chev"></i></div>
                <div class="item"><svg class="i20"><use href="#p-x"/></svg><span>沿 <u>X</u></span></div>
                <div class="item"><svg class="i20"><use href="#p-y"/></svg><span>沿 <u>Y</u></span></div>
                <div class="item"><svg class="i20"><use href="#p-z"/></svg><span>沿 <u>Z</u></span></div>
                <div class="item"><svg class="i20"><use href="#p-fix"/></svg><span>固定<small>(F)</small></span></div>
              </div>
              <div class="sec sec-opt">
                <div class="hdr">选项(O)<i class="chev"></i></div>
                <label class="check"><i class="box"></i><span>作为构造线<small>(C)</small></span></label>
                <label class="check"><i class="box"></i><span>无限长度<small>(I)</small></span></label>
              </div>
              <div class="sec sec-last">
                <div class="hdr">参数<i class="chev"></i></div>
                <div class="param"><svg class="i20"><use href="#p-dim"/></svg><span class="input">70.21862226</span><span class="spin"><i class="chev chev-s"></i><i class="chev chev-s chev-d"></i></span></div>
              </div>
            </div>
            <div class="sbar">
              <div class="sb-btn"><i class="chev chev-k"></i></div>
              <div class="sb-thumb"></div>
              <div class="sb-rest"><i class="chev chev-k chev-d"></i></div>
            </div>
          </div>
        </section>

        <main class="viewport">
          <i class="handle"><i class="dot"></i></i>
          <div class="tree"><i class="tree-arrow"></i><svg class="i20"><use href="#t-model"/></svg><span>1111 (默认&lt;&lt;默认...</span></div>

          <div class="viewbar">
            <svg class="vt"><use href="#v1"/></svg><svg class="vt"><use href="#v2"/></svg><svg class="vt"><use href="#v3"/></svg><svg class="vt"><use href="#v4"/></svg><svg class="vt"><use href="#v5"/></svg><svg class="vt"><use href="#v6"/></svg>
            <span class="vd"><i class="dd"></i></span>
            <svg class="vt"><use href="#v7"/></svg>
            <span class="vd vm"><i class="dd"></i></span>
            <svg class="vt vm"><use href="#v8"/></svg>
            <span class="vd"><i class="dd"></i></span>
            <svg class="vt"><use href="#v9"/></svg><svg class="vt"><use href="#v10"/></svg>
            <span class="vd"><i class="dd"></i></span>
            <svg class="vt vm"><use href="#v11"/></svg>
            <span class="vd"><i class="dd"></i></span>
          </div>

          <div class="winbtns">
            <svg class="wb"><use href="#w1"/></svg><svg class="wb"><use href="#w2"/></svg><svg class="wb"><use href="#w3"/></svg><svg class="wb"><use href="#w4"/></svg><svg class="wb"><use href="#w5"/></svg>
          </div>

          <div class="righttabs">
            <span class="rtab"><svg class="i20"><use href="#r-home"/></svg></span>
            <span class="rtab"><svg class="i20"><use href="#r-book"/></svg></span>
            <span class="rtab"><svg class="i20"><use href="#r-folder"/></svg></span>
            <span class="rtab"><svg class="i20"><use href="#r-lay"/></svg></span>
            <span class="rtab rtab-on"><svg class="i20"><use href="#t-ball"/></svg></span>
            <span class="rtab"><svg class="i20"><use href="#t-list"/></svg></span>
            <span class="rtab"><svg class="i20"><use href="#r-chat"/></svg></span>
          </div>

          <svg class="scene" viewBox="254 124 1628 781" xmlns="http://www.w3.org/2000/svg">
            <defs>
              <linearGradient id="gBody" gradientUnits="userSpaceOnUse" x1="0" y1="384" x2="0" y2="645">
                <stop offset="0" stop-color="#666"/><stop offset=".2" stop-color="#5a5a5a"/><stop offset=".34" stop-color="#646464"/><stop offset=".42" stop-color="#8e8e8e"/><stop offset=".52" stop-color="#c4c4c4"/><stop offset=".62" stop-color="#ececec"/><stop offset=".72" stop-color="#fff"/><stop offset="1" stop-color="#fff"/>
              </linearGradient>
              <linearGradient id="gBlue" gradientUnits="userSpaceOnUse" x1="0" y1="384" x2="0" y2="645">
                <stop offset="0" stop-color="#101820"/><stop offset=".33" stop-color="#17293a"/><stop offset=".55" stop-color="#3a6f95"/><stop offset=".8" stop-color="#68a2c9"/><stop offset="1" stop-color="#7ab1d7"/>
              </linearGradient>
              <linearGradient id="gRedDark" gradientUnits="userSpaceOnUse" x1="0" y1="384" x2="0" y2="500">
                <stop offset="0" stop-color="#1c0605"/><stop offset=".6" stop-color="#2e0503"/><stop offset="1" stop-color="#4a3a3a"/>
              </linearGradient>
              <linearGradient id="gSlotR" x1="0" y1="0" x2="1" y2="1"><stop offset="0" stop-color="#fff"/><stop offset=".55" stop-color="#e6e6e6"/><stop offset="1" stop-color="#8c8c8c"/></linearGradient>
              <linearGradient id="gSlotL" x1="0" y1="0" x2="0" y2="1"><stop offset="0" stop-color="#eee"/><stop offset=".3" stop-color="#bbb"/><stop offset=".7" stop-color="#6a6a6a"/><stop offset="1" stop-color="#8a8a8a"/></linearGradient>
              <linearGradient id="gSlot3" x1="0" y1="0" x2="1" y2="1"><stop offset="0" stop-color="#fff"/><stop offset=".6" stop-color="#fff"/><stop offset="1" stop-color="#777"/></linearGradient>
              <filter id="blur1" x="-20%" y="-20%" width="140%" height="140%"><feGaussianBlur stdDeviation="1.200"/></filter>
              <filter id="blur3" x="-30%" y="-30%" width="160%" height="160%"><feGaussianBlur stdDeviation="3"/></filter>
              <filter id="rough" x="-20%" y="-20%" width="140%" height="140%"><feTurbulence type="fractalNoise" baseFrequency=".16" numOctaves="2" seed="4"/><feDisplacementMap in="SourceGraphic" scale="5" xChannelSelector="R" yChannelSelector="G"/><feGaussianBlur stdDeviation=".6"/></filter>
              <clipPath id="bodyClip"><path d="M637 407H960C980 407 993 397 1007 386H1085L1105 383.500H1493V645H1105L1085 642H1007C993 632 985 626 967 622H637Z"/></clipPath>
              <clipPath id="slot1"><path d="M990 405H1083Q1105 408 1105 425Q1105 441 1083 444H990Z"/></clipPath>
              <clipPath id="slot2"><path d="M1007 486H1083Q1105 495 1105 515Q1105 534 1083 543H1007Q990 534 990 515Q990 495 1007 486Z"/></clipPath>
              <clipPath id="slot3"><path d="M1000 584H1083Q1105 590 1105 605Q1105 620 1083 625H1007Q990 620 990 605Q990 590 1000 584Z"/></clipPath>
            </defs>

            <!-- sketch -->
            <path d="M685 282L448 431" stroke="#cfcff8" stroke-width="2"/>
            <circle cx="448" cy="431" r="2" fill="#bcbcf2"/>
            <path d="M765 282H791V345H685" fill="none" stroke="#d8d860" stroke-width="2" stroke-dasharray="3 2"/>
            <path d="M685 282L791 345" stroke="#2020e8" stroke-width="1.200"/>
            <path d="M658 282H760M685 255V362" stroke="#f00" stroke-width="2"/>
            <path d="M765 282l-11-4v8zM685 362l-4-12h8z" fill="#f00"/>
            <text x="811" y="345" class="dim-text">70.22</text>
            <rect x="815" y="364" width="8" height="5" fill="#bbb" stroke="#333"/><rect x="818" y="366" width="7" height="5" fill="#777" stroke="#111"/>
            <text x="818" y="378" class="cursor-text">2X</text>

            <!-- model -->
            <g clip-path="url(#bodyClip)">
              <rect x="630" y="380" width="870" height="270" fill="url(#gBody)"/>
              <!-- left step lines -->
              <path d="M830 435V456H852V472" fill="none" stroke="#1a1a1a" stroke-width="2"/>
              <path d="M857 407V420M860 407V420" stroke="#222" stroke-width="2" stroke-dasharray="2 1"/>
              <path d="M852 472L848 600" stroke="url(#gBlue)" stroke-width="3"/>
              <path d="M846 590V607H842V616H821V622" fill="none" stroke="#7ab1d7" stroke-width="2"/>
              <path d="M862 407H880L876 500L867 622H850L854 540L858 470Z" fill="url(#gBlue)"/>
              <path d="M863 525L861 572" stroke="#d4e6f2" stroke-width="1.500"/>
              <path d="M857 470L853 570" stroke="#fff" stroke-width="2"/>
              <!-- left black curve -->
              <path d="M903 407Q915 430 930 450T960 493Q972 500 985 486T1003 462" fill="none" stroke="#0c0c0c" stroke-width="7" filter="url(#rough)"/>
              <path d="M950 495L960 510" stroke="#888" stroke-width="8" stroke-dasharray="3 4" filter="url(#blur1)"/>
              <path d="M937 408H985L1007 390V425L985 441L965 435L946 420Z" fill="#111" filter="url(#rough)"/>
              <path d="M955 418Q975 412 995 424M950 412Q975 406 998 418" fill="none" stroke="#777" stroke-width="1.500"/>
              <path d="M903 622Q930 610 950 592T970 587Q985 595 1007 612" fill="none" stroke="#111" stroke-width="7" filter="url(#rough)"/>
              <path d="M940 622L1000 618" stroke="#111" stroke-width="2" stroke-dasharray="6 2"/>
              <path d="M985 622L1007 641" stroke="#111" stroke-width="6"/>
              <path d="M1000 400V470L1035 440Z" fill="#333" filter="url(#blur3)"/>

              <!-- middle colour -->
              <path d="M1007 384H1095L1085 440L1060 495H1000Z" fill="url(#gRedDark)" filter="url(#blur1)"/>
              <ellipse cx="1025" cy="408" rx="24" ry="32" fill="#3d2b06"/>
              <path d="M1062 384Q1055 430 1058 495" fill="none" stroke="#050505" stroke-width="14" filter="url(#blur1)"/>
              <path d="M1002 450L1042 490H1000Z" fill="#777" filter="url(#blur1)"/>
              <path d="M1007 384H1014V486H1007" fill="#222"/>

              <!-- right of slots -->
              <ellipse cx="1190" cy="428" rx="22" ry="40" fill="#382906" filter="url(#blur1)"/>
              <path d="M1160 440H1208V495H1160Z" fill="#383838" filter="url(#rough)"/>
              <path d="M1127 465H1165V495H1127Z" fill="#2c2c2c" filter="url(#rough)"/>
              <path d="M1197 385Q1185 420 1150 440T1085 450L1066 455" fill="none" stroke="#0d0d0d" stroke-width="6" filter="url(#rough)"/>
              <path d="M1127 463Q1148 490 1152 520T1146 590L1117 624" fill="none" stroke="#161616" stroke-width="10" filter="url(#blur1)"/>
              <path d="M1127 463Q1148 490 1152 520T1146 590L1117 624" fill="none" stroke="#999" stroke-width="2" stroke-dasharray="2 9"/>
              <path d="M1083 524H1135V583H1083Z" fill="#1c1c1c" filter="url(#blur1)"/>
              <path d="M1090 524V583M1100 524V583M1112 524V583M1124 524V583" stroke="#666" stroke-width="1.200" filter="url(#blur1)"/>
              <path d="M1062 548H1080V583H1062Z" fill="#aaa" filter="url(#blur3)"/>
              <path d="M1117 624L1170 646" stroke="#111" stroke-width="5" filter="url(#rough)"/>
              <path d="M1055 632L1170 648" stroke="#111" stroke-width="3"/>
              <path d="M1155 648Q1165 625 1180 624Q1192 626 1202 648Z" fill="#fbb416" filter="url(#blur1)"/>

              <!-- lower red -->
              <path d="M1000 625H1052L1064 648H1000Z" fill="#e6300f"/>

              <!-- right stripes -->
              <path d="M1218 480L1232 480L1226 640L1222 640Z" fill="#bbb" filter="url(#blur3)"/>
              <path d="M1242 384H1274L1268 410L1258 480L1251 600L1250 645H1229L1236 520L1240 440Z" fill="url(#gBlue)"/>
              <path d="M1238 384V480" stroke="#2a2a2a" stroke-width="3" stroke-dasharray="3 3"/>
              <path d="M1249 495L1248 505M1248 560L1246 590" stroke="#e6eef4" stroke-width="2"/>
              <path d="M1268 400L1265 460" stroke="#111" stroke-width="6"/>
              <path d="M1280 386V470" stroke="#1a1a1a" stroke-width="2"/>
              <path d="M1273 454H1303L1305 440" fill="none" stroke="#111" stroke-width="2"/>
              <path d="M1307 387V397" stroke="#111" stroke-width="6"/>
              <path d="M1305 405V420M1304 432V450M1310 472V492" stroke="#222" stroke-width="2"/>
              <path d="M1303 493L1300 520" stroke="#19384f" stroke-width="5"/>
              <path d="M1272 524L1270 582" stroke="#5a91b8" stroke-width="5"/>
              <path d="M1298 524L1295 582M1298 582L1297 608" stroke="#5a91b8" stroke-width="5"/>
              <path d="M1302 610L1300 622" stroke="#7ab1d7" stroke-width="2"/>
              <path d="M1256 631H1290V645M1270 625V632M1266 633V645" fill="none" stroke="#7ab1d7" stroke-width="2"/>
            </g>

            <!-- slots -->
            <g clip-path="url(#slot1)">
              <rect x="990" y="405" width="115" height="39" fill="#1c1206"/>
              <ellipse cx="1025" cy="425" rx="26" ry="20" fill="#3d2b06"/>
              <rect x="1000" y="405" width="40" height="14" fill="#c09510" filter="url(#blur1)"/>
              <path d="M1040 405L1048 444H1066L1058 405Z" fill="#0a0a0a" filter="url(#blur1)"/>
              <path d="M1062 444L1072 412L1088 405V444Z" fill="#300504" filter="url(#blur1)"/>
              <rect x="1056" y="405" width="28" height="9" fill="#e0300f" filter="url(#blur1)"/>
              <path d="M1084 405H1105V444H1078Z" fill="#5c5c5c" filter="url(#blur1)"/>
              <path d="M1090 405Q1105 415 1095 444" fill="none" stroke="#aaa" stroke-width="5" filter="url(#blur1)"/>
            </g>
            <path d="M1000 417L1078 407M1000 405H1083Q1105 408 1105 425Q1105 441 1083 444H1000" fill="none" stroke="#000" stroke-width="1.200"/>

            <g clip-path="url(#slot2)">
              <rect x="990" y="486" width="70" height="57" fill="url(#gSlotL)"/>
              <rect x="1060" y="486" width="45" height="57" fill="url(#gSlotR)"/>
              <path d="M1026 486H1052L1046 528Z" fill="#e03015" filter="url(#blur1)"/>
              <path d="M1056 486L1066 486L1064 543L1052 543Z" fill="#0c0c0c" filter="url(#blur1)"/>
              <path d="M1065 505L1082 543H1062Z" fill="#222" filter="url(#rough)"/>
            </g>
            <path d="M995 498L1062 488M995 532L1075 543M1007 486H1083Q1105 495 1105 515Q1105 534 1083 543H1007Q990 534 990 515Q990 495 1007 486Z" fill="none" stroke="#000" stroke-width="1.200"/>

            <g clip-path="url(#slot3)">
              <rect x="990" y="584" width="115" height="41" fill="#fff"/>
              <path d="M1000 600L1040 588L1052 625H995Z" fill="#e8300f" filter="url(#blur1)"/>
              <rect x="990" y="584" width="8" height="41" fill="#222"/>
              <path d="M1042 584H1060V625H1050Z" fill="#111" filter="url(#blur1)"/>
              <rect x="1060" y="584" width="45" height="41" fill="url(#gSlot3)"/>
              <path d="M1000 612H1060L1083 625H1000Z" fill="#3a1a10" opacity=".7"/>
            </g>
            <path d="M1000 610L1075 618M1000 584H1083Q1105 590 1105 605Q1105 620 1083 625H1007Q990 620 990 605Q990 590 1000 584Z" fill="none" stroke="#000" stroke-width="1.200"/>

            <!-- dashes and outline -->
            <path d="M959 407V622M1006 388V640M1009 440V584" fill="none" stroke="#111" stroke-dasharray="2 1.500"/>
            <path d="M637 407H960C980 407 993 397 1007 386H1085L1105 383.500H1493V645H1105L1085 642H1007C993 632 985 626 967 622H637Z" fill="none" stroke="#222" stroke-width="1.500"/>
            <path d="M637 622H967" stroke="#000" stroke-width="2"/>

            <!-- handle -->
            <path d="M1489 510l8 8M1497 510l-8 8M1493 509v10M1497 514h8" stroke="#f00"/>
            <path d="M1503 509h6l5 5-5 5h-6z" fill="#f00"/>

            <!-- annotation -->
            <path d="M746 405L808 382L806 375L827 379L813 393L811 386Z" fill="#ff2a1a"/>
            <text x="598" y="435" class="note-text">坐标系需要调整。</text>

            <!-- triad -->
            <path d="M304 836H330" stroke="#b02020" stroke-width="5"/><path d="M304 834.500H330" stroke="#e88" stroke-width="1"/>
            <path d="M330 829L341 836L330 843Z" fill="#c01818"/>
            <path d="M304 836V866" stroke="#2020b8" stroke-width="5"/>
            <path d="M298 863H310L304 874Z" fill="#1818c0"/>
            <circle cx="304" cy="836" r="5.500" fill="#135a13"/>
            <text x="301" y="840" class="triad triad-y">Y</text>
            <text x="341" y="841" class="triad triad-x">X</text>
            <text x="300" y="883" class="triad triad-z">Z</text>

            <!-- ghost cross -->
            <path d="M1822 194L1838 210M1838 194L1822 210" stroke="#f3c9c9" stroke-width="8" stroke-linecap="round"/>

            <!-- watermark -->
            <g>
              <path d="M1647 838L1669 825L1691 838L1683 843Q1665 836 1647 838Z" fill="#d6f0fe"/>
              <path d="M1683 833L1705 846V860Q1695 872 1689 878V849Q1688 840 1683 833Z" fill="#98dafc"/>
              <path d="M1705 860V887L1691 895Q1675 895 1670 888L1689 878Q1700 870 1705 860Z" fill="#84cdf6"/>
              <path d="M1691 895L1669 906L1655 897Q1650 888 1650 878L1670 890Q1680 895 1691 895Z" fill="#80d4fc"/>
              <path d="M1655 897L1633 887V868Q1640 858 1649 854V878Q1650 888 1655 897Z" fill="#a5defc"/>
              <path d="M1633 868V846L1647 838Q1665 836 1669 845L1649 854Q1640 858 1633 868Z" fill="#c1e8fd"/>
              <path d="M1669 847L1685 856L1669 865L1653 856Z" fill="#d6f0fe"/>
              <path d="M1653 856L1669 865V884L1653 875Z" fill="#a9dcfa"/>
              <path d="M1685 856L1669 865V884L1685 875Z" fill="#84cdf6"/>
            </g>
          </svg>

          <svg class="ghost"><use href="#ghost"/></svg>
          <span class="view-label">*上视</span>
        </main>
      </div>

      <footer class="bottom">
        <div class="nav"><i class="nv nv-1"></i><i class="nv nv-2"></i><i class="nv nv-3"></i><i class="nv nv-4"></i></div>
        <span class="btab btab-on">模型</span><span class="btab btab-3d">3D 视图</span><span class="btab btab-mo">运动算例 1</span>
      </footer>
    </div>

    <aside class="rstrip">
      <div class="rgrip"></div>
      <div class="ricons">
        <svg class="i20"><use href="#q1"/></svg>
        <svg class="i20"><use href="#q2"/></svg>
        <svg class="i20"><use href="#q3"/></svg>
        <svg class="i20"><use href="#q4"/></svg>
        <svg class="i20"><use href="#q5"/></svg>
        <hr class="rsep">
        <svg class="i20"><use href="#q6"/></svg>
        <svg class="i20"><use href="#q7"/></svg>
        <svg class="i20"><use href="#q8"/></svg>
        <svg class="i20"><use href="#q9"/></svg>
        <hr class="rsep rsep-wide">
      </div>
    </aside>
  </div>
</div>
</body>
</html>
```

FILE: styles.css
```css
* { box-sizing: border-box; }
html, body { margin: 0; padding: 0; background: #fff; overflow: hidden; }
body { font-family: "Noto Sans CJK SC", "Noto Sans", sans-serif; font-size: 14px; color: #111; }
i { font-style: normal; display: block; }
svg { display: block; flex: none; }
.sprite { position: absolute; width: 0; height: 0; overflow: hidden; }
.svgt { font-family: "Liberation Sans", sans-serif; }
.svgb { font-family: "Liberation Sans", sans-serif; font-weight: 700; }
.i16 { width: 16px; height: 16px; }
.i20 { width: 20px; height: 20px; }
.i24 { width: 24px; height: 24px; }

.app { width: 1916px; height: 920px; display: flex; flex-direction: column; background: #f6f6f6; overflow: hidden; }

/* top strips */
.qat { height: 10px; flex: none; }
.qat-bar { width: 594px; height: 10px; border-right: 1px solid #888; border-bottom: 1px solid #888; display: flex; gap: 20px; padding-left: 18px; }
.bit { width: 9px; height: 2px; }
.bit-w { width: 14px; }
.bit-g { background: #2f8a3a; }
.bit-k { background: #222; }
.bit-b { background: #1f6f9c; }
.bit-r { background: #d8161d; }
.bit-n { background: #c8c8c8; }

.cmdbar { height: 33px; flex: none; border-bottom: 1px solid #888; }
.cmd-group { width: 423px; height: 32px; border-right: 1px solid #888; display: flex; align-items: center; padding-left: 10px; }
.cmd { width: 27px; height: 26px; display: flex; align-items: center; justify-content: center; }
.cmd-on { background: #a9a9a9; border: 1px solid #777; }

/* ribbon */
.ribbon { height: 81px; flex: none; display: flex; border-bottom: 1px solid #888; font-size: 14px; line-height: 20px; color: #000; }
.rsec { border-right: 1px solid #cfcfcf; height: 78px; margin-top: 1px; display: flex; flex: none; }
.rsec-first { width: 136px; padding-left: 2px; }
.sk-btn { width: 66px; display: flex; flex-direction: column; }
.sk-main { height: 58px; background: #a9a9a9; border: 1px solid #8a8a8a; display: flex; flex-direction: column; align-items: center; padding-top: 5px; }
.sk-drop { height: 20px; border: 1px solid #aaa; border-top: 0; background: #fff; display: flex; align-items: center; justify-content: center; }
.dim-btn { width: 66px; display: flex; flex-direction: column; align-items: center; padding-top: 5px; position: relative; }
.dim-dd { margin-top: 22px; }

.dd { width: 0; height: 0; border-left: 4px solid transparent; border-right: 4px solid transparent; border-top: 4px solid #aaa; }
.dd-k { border-top-color: #333; }

.tool-grid { width: 318px; display: grid; grid-template-columns: 26px 14px 26px 14px 26px 14px 26px 14px repeat(6, 26px); grid-template-rows: repeat(3, 26px); }
.tc { display: flex; align-items: center; justify-content: center; }
.tc-on { background: #a9a9a9; border: 1px solid #777; }
.tc-ddbox { border: 1px solid #aaa; border-left: 0; background: #fff; }

.rsec-edit { width: 258px; padding-left: 2px; }
.big { width: 52px; display: flex; flex-direction: column; align-items: center; padding-top: 13px; text-align: center; }
.big span { display: block; width: 42px; }
.big-off { color: #c4c4c4; }
.big-quick { width: 56px; }
.big-inst { width: 64px; }
.big-inst span { width: auto; }
.big-shade { width: 60px; }
.mini-list { flex: 1; padding-left: 5px; display: flex; flex-direction: column; }
.mini { height: 26px; display: flex; align-items: center; gap: 3px; position: relative; }
.mini-off { color: #c4c4c4; }
.mini-dd { position: absolute; right: 6px; top: 12px; }

.rsec-rel { width: 181px; }
.tall { display: flex; flex-direction: column; align-items: center; padding-top: 6px; width: 54px; white-space: nowrap; }
.tall-wide { width: 128px; }
.tall-dd { margin-top: 21px; }
.rsec-snap { width: 55px; }
.rsec-last { border-right: 0; }

/* workspace */
.workspace { flex: 1; display: flex; position: relative; min-height: 0; }
.tabs { position: absolute; left: 0; top: 0; height: 28px; display: flex; z-index: 3; }
.tab { width: 56px; height: 28px; background: #cfcfcf; border-right: 1px solid #888; border-bottom: 1px solid #888; font-size: 16px; line-height: 26px; text-align: center; color: #222; white-space: nowrap; }
.tab-a { width: 52px; }
.tab-on { background: #f6f6f6; border-bottom-color: #f6f6f6; border-left: 1px solid #888; }
.tab-wide { width: 153px; font-size: 15px; }
.tab-today { width: 85px; }

.lstrip { width: 28px; flex: none; padding-top: 28px; background: #f6f6f6; }
.lgrip { height: 3px; margin: 2px 1px 0; border-top: 2px dotted #aaa; width: 25px; }
.licons { margin-top: 12px; padding: 0 0 9px 4px; width: 26px; border-bottom: 1px solid #999; display: flex; flex-direction: column; gap: 6px; }

.center { flex: 1; display: flex; flex-direction: column; min-width: 0; }
.center-top { flex: 1; display: flex; min-height: 0; }

/* panel */
.panel { width: 226px; flex: none; padding-top: 28px; background: #f6f6f6; border-right: 1px solid #888; display: flex; flex-direction: column; overflow: hidden; }
.p-ruler { height: 5px; border-bottom: 1px solid #bbb; margin-right: 3px; flex: none; }
.p-grip { height: 21px; border-bottom: 1px solid #bbb; margin-right: 3px; display: flex; align-items: center; justify-content: center; flex: none; }
.dot { width: 5px; height: 5px; border-radius: 50%; background: #aaa; border: 1px solid #999; }
.p-tabs { margin-top: 4px; height: 26px; border-bottom: 1px solid #aaa; margin-right: 3px; padding-left: 2px; display: flex; flex: none; }
.ptab { width: 40px; height: 26px; background: #cdcdcd; border-right: 1px solid #999; border-top: 1px solid #999; display: flex; align-items: center; justify-content: center; }
.ptab-on { background: #f6f6f6; border-bottom: 1px solid #f6f6f6; }
.p-title { height: 40px; flex: none; display: flex; align-items: center; padding-left: 12px; position: relative; }
.p-title b { font-size: 17px; margin-left: 8px; }
.p-help { position: absolute; left: 193px; top: 12px; }
.p-actions { height: 34px; flex: none; display: flex; border-bottom: 1px solid #aaa; margin-right: 3px; padding: 0 0 10px 11px; gap: 20px; }
.pa { width: 14px; font-size: 16px; line-height: 24px; color: #bbb; }
.p-body { flex: 1; display: flex; padding: 1px 0 0 5px; min-height: 0; }
.p-scroll { width: 192px; flex: none; }
.sbar { width: 19px; margin-left: 4px; height: 616px; background: #f1f1f1; display: flex; flex-direction: column; flex: none; }
.sb-btn { height: 21px; display: flex; align-items: center; justify-content: center; }
.sb-thumb { height: 521px; background: #c9c9c9; }
.sb-rest { flex: 1; display: flex; align-items: flex-end; justify-content: center; padding-bottom: 8px; }

.sec { border-top: 1px solid #aaa; }
.hdr { height: 31px; padding-left: 4px; display: flex; align-items: center; font-size: 17px; font-weight: 700; color: #8a8a8a; text-shadow: 1px 1px 0 #fff; position: relative; }
.chev { width: 8px; height: 8px; border-left: 2px solid #777; border-top: 2px solid #777; transform: rotate(45deg); }
.hdr .chev { position: absolute; right: 5px; top: 14px; }
.chev-k { border-color: #555; }
.chev-d { transform: rotate(225deg); }
.chev-s { width: 7px; height: 7px; border-color: #ccc; }
.note { height: 77px; margin-bottom: 4px; background: #ffff80; padding: 1px 2px 0 4px; font-size: 16px; line-height: 17.500px; color: #b2b2a8; text-shadow: 1px 1px 0 #fff; }
.rel-row { height: 99px; display: flex; padding-left: 8px; gap: 9px; }
.rel-row .i20 { margin-top: 7px; }
.rel-box { width: 151px; height: 99px; background: #fff; border: 1px solid #8c94ad; }
.state-row { height: 48px; padding-left: 8px; display: flex; align-items: center; gap: 9px; font-size: 16px; color: #aaa; }
.sec-add { padding-bottom: 10px; }
.item { height: 30px; padding-left: 8px; display: flex; align-items: center; gap: 11px; font-size: 16px; color: #a4abb4; text-shadow: 1px 1px 0 #fff; }
.item small { font-size: 13px; }
.sec-opt { height: 90px; }
.sec-opt .hdr { height: 27px; }
.check { height: 28px; padding-left: 37px; display: flex; align-items: center; gap: 3px; font-size: 16px; color: #a4a4a4; text-shadow: 1px 1px 0 #fff; }
.check small { font-size: 13px; }
.box { width: 16px; height: 16px; background: #fff; border: 1px solid #ccc; flex: none; }
.param { height: 28px; display: flex; align-items: center; padding-left: 9px; }
.input { width: 120px; height: 28px; margin-left: 7px; background: #d5d8dd; border: 1px solid #c4c4c4; outline: 1px solid #fff; outline-offset: -3px; padding-left: 4px; font-family: "Noto Sans", sans-serif; font-size: 13px; line-height: 25px; color: #8a8a8a; }
.spin { width: 18px; height: 28px; margin-left: 2px; background: #f0f0f0; display: flex; flex-direction: column; align-items: center; justify-content: space-around; padding: 4px 0; }

/* viewport */
.viewport { flex: 1; position: relative; background: #fff; min-width: 0; }
.scene { position: absolute; left: -1px; top: 0; width: 1628px; height: 781px; }
.handle { position: absolute; left: -1px; top: 366px; width: 11px; height: 48px; background: #f6f6f6; border: 1px solid #888; border-left: 0; z-index: 2; display: flex; align-items: center; justify-content: center; }
.tree { position: absolute; left: 7px; top: 38px; display: flex; align-items: center; gap: 4px; font-size: 14px; letter-spacing: 1.100px; line-height: 20px; color: #111; z-index: 2; white-space: nowrap; }
.tree-arrow { width: 0; height: 0; border-left: 5px solid #222; border-top: 4px solid transparent; border-bottom: 4px solid transparent; margin-right: 5px; }
.viewbar { position: absolute; left: 633px; top: 3px; display: flex; align-items: center; z-index: 2; }
.vt { width: 20px; height: 20px; margin: 0 3px; }
.vd { width: 12px; display: flex; justify-content: center; }
.vm { margin-left: 3px; }
.vt.vm { margin-left: 6px; }
.winbtns { position: absolute; left: 1492px; top: 9px; display: flex; z-index: 2; }
.wb { width: 12px; height: 12px; margin: 0 7px; }
.righttabs { position: absolute; right: 0; top: 84px; width: 33px; display: flex; flex-direction: column; border: 1px solid #888; border-right: 0; z-index: 2; }
.rtab { height: 30px; background: #cdcdcd; border-bottom: 1px solid #888; display: flex; align-items: center; justify-content: center; }
.rtab:last-child { border-bottom: 0; height: 28px; }
.rtab-on { background: #fff; }
.ghost { position: absolute; left: 1519px; top: 36px; width: 46px; height: 36px; z-index: 2; }
.view-label { position: absolute; left: 12px; top: 760px; font-size: 18px; line-height: 18px; color: #111; z-index: 2; }

.dim-text { font-family: "Liberation Mono", monospace; font-size: 15px; fill: #111; }
.cursor-text { font-family: "Liberation Mono", monospace; font-size: 7px; font-weight: 700; fill: #111; }
.note-text { font-family: "Noto Sans CJK SC", sans-serif; font-size: 32px; fill: #ff2a1a; }
.triad { font-family: "Liberation Serif", serif; font-size: 13px; }
.triad-x { fill: #f00; }
.triad-y { fill: #0a3a0a; font-size: 9px; }
.triad-z { fill: #00f; }

/* bottom */
.bottom { height: 15px; flex: none; display: flex; background: #fff; border-top: 1px solid #888; border-left: 2px solid #a9c4cf; overflow: hidden; padding-left: 25px; }
.nav { width: 80px; height: 14px; background: #8f8fb0; border-top: 1px solid #111; display: flex; justify-content: space-around; align-items: center; flex: none; margin-right: 15px; }
.nv { width: 0; height: 0; border-top: 6px solid transparent; border-bottom: 6px solid transparent; }
.nv-1, .nv-2 { border-right: 7px solid #6f6f90; }
.nv-3, .nv-4 { border-left: 7px solid #6f6f90; }
.btab { background: #d9d9d9; border-left: 1px solid #999; font-size: 17px; line-height: 20px; color: #222; white-space: nowrap; text-align: center; flex: none; }
.btab-on { background: #fff; border-left: 0; width: 47px; text-align: left; }
.btab-3d { width: 76px; }
.btab-mo { width: 108px; border-right: 1px solid #999; }

/* right strip */
.rstrip { width: 34px; flex: none; background: #f6f6f6; border-left: 1px solid #e8e8e8; }
.rgrip { margin: 3px 2px 0 5px; height: 2px; border-top: 2px dotted #aaa; }
.ricons { display: flex; flex-direction: column; align-items: center; gap: 6px; padding-top: 13px; }
.rsep { width: 24px; height: 1px; margin: 2px 0 -3px; border: 0; background: #aaa; }
.rsep-wide { width: 32px; margin: 4px 0 0; }
```
